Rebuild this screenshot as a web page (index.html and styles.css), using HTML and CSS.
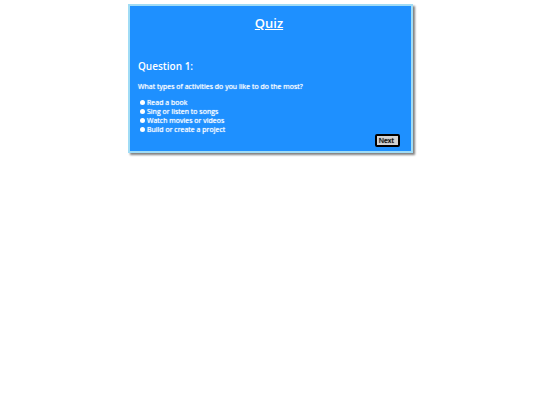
FILE: index.html
```html
<!DOCTYPE html>
<html lang="en">
<head>
    <meta charset="UTF-8">
    <meta name="viewport" content="width=device-width, initial-scale=1.0">
    <title>Quiz</title>
    <link rel="stylesheet" href="styles.css">
</head>
<body>
    <form class="quiz">
        <h1>Quiz</h1>
        <h2>Question 1:</h2>
        <p class="question" id="question">What types of activities do you like to do the most?</p>
        <div class="answers" role="radiogroup" aria-labelledby="question">
            <div class="answer">
                <input type="radio" name="activity" id="read" value="read">
                <label for="read">Read a book</label>
            </div>
            <div class="answer">
                <input type="radio" name="activity" id="sing" value="sing">
                <label for="sing">Sing or listen to songs</label>
            </div>
            <div class="answer">
                <input type="radio" name="activity" id="watch" value="watch">
                <label for="watch">Watch movies or videos</label>
            </div>
            <div class="answer">
                <input type="radio" name="activity" id="build" value="build">
                <label for="build">Build or create a project</label>
            </div>
        </div>
        <button type="button" class="next">Next</button>
    </form>
</body>
</html>
```

FILE: styles.css
```css
* {
    margin: 0;
    padding: 0;
    box-sizing: border-box;
}

body {
    padding: 4px 127px 4px 128px;
    background-color: white;
    font-family: "Open Sans", sans-serif;
    font-size: 7px;
    line-height: 9px;
}

.quiz {
    display: flex;
    flex-direction: column;
    padding: 7px 11px 4px 8px;
    color: white;
    background-color: dodgerblue;
    border: 2px solid #a0dcf5;
    box-shadow: 2px 2px 2px gray;
}

h1 {
    font-size: 13px;
    line-height: 20px;
    font-weight: 600;
    text-align: center;
    text-decoration: underline;
}

h2 {
    margin-top: 25px;
    font-size: 10px;
    line-height: 16px;
    font-weight: 600;
}

.question {
    margin: 8px 0 7px;
    text-shadow: 0 0 1px white;
}

.answer {
    display: flex;
    align-items: center;
    gap: 2px;
    padding-left: 2px;
    text-shadow: 0 0 1px white;
}

.answer input {
    appearance: none;
    width: 5px;
    height: 5px;
    border-radius: 50%;
    background-color: white;
}

.answer input:checked {
    border: 1px solid white;
    background-color: black;
}

.next {
    align-self: flex-end;
    padding: 0 4px 0 2px;
    font: inherit;
    color: black;
    text-shadow: 0 0 1px black;
    background-color: lightgray;
    border: 2px solid black;
    border-radius: 2px;
}
```
